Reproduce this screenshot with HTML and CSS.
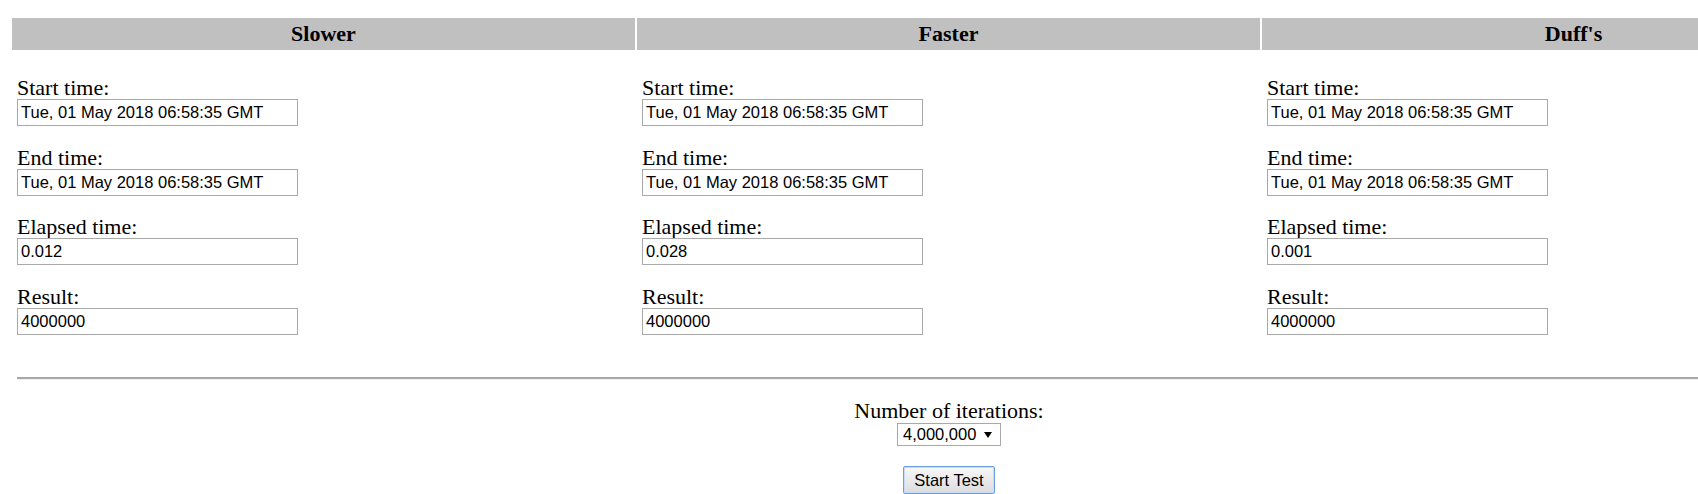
FILE: index.html
```html
<!DOCTYPE html>
<html lang="en">
<head>
<meta charset="utf-8">
<title>Loop timing test</title>
<link rel="stylesheet" href="styles.css">
</head>
<body>
<div class="page">
  <div class="cols">
    <div class="head">Slower</div>
    <div class="head">Faster</div>
    <div class="head">Duff's</div>

    <div class="cell">
      <div class="field"><div class="lbl">Start time:</div><input class="txt" type="text" value="Tue, 01 May 2018 06:58:35 GMT"></div>
      <div class="field"><div class="lbl">End time:</div><input class="txt" type="text" value="Tue, 01 May 2018 06:58:35 GMT"></div>
      <div class="field"><div class="lbl">Elapsed time:</div><input class="txt" type="text" value="0.012"></div>
      <div class="field"><div class="lbl">Result:</div><input class="txt" type="text" value="4000000"></div>
    </div>
    <div class="cell">
      <div class="field"><div class="lbl">Start time:</div><input class="txt" type="text" value="Tue, 01 May 2018 06:58:35 GMT"></div>
      <div class="field"><div class="lbl">End time:</div><input class="txt" type="text" value="Tue, 01 May 2018 06:58:35 GMT"></div>
      <div class="field"><div class="lbl">Elapsed time:</div><input class="txt" type="text" value="0.028"></div>
      <div class="field"><div class="lbl">Result:</div><input class="txt" type="text" value="4000000"></div>
    </div>
    <div class="cell">
      <div class="field"><div class="lbl">Start time:</div><input class="txt" type="text" value="Tue, 01 May 2018 06:58:35 GMT"></div>
      <div class="field"><div class="lbl">End time:</div><input class="txt" type="text" value="Tue, 01 May 2018 06:58:35 GMT"></div>
      <div class="field"><div class="lbl">Elapsed time:</div><input class="txt" type="text" value="0.001"></div>
      <div class="field"><div class="lbl">Result:</div><input class="txt" type="text" value="4000000"></div>
    </div>
  </div>

  <hr class="rule">

  <div class="controls">
    <div class="lbl">Number of iterations:</div>
    <div class="select-wrap">
      <select class="sel">
        <option>4,000,000</option>
      </select>
    </div>
    <button class="btn" type="button">Start Test</button>
  </div>
</div>
</body>
</html>
```
FILE: styles.css
```css
html, body {
  margin: 0;
  padding: 0;
  background: #ffffff;
  overflow: hidden;
}
body {
  font-family: "Liberation Serif", "Times New Roman", serif;
  color: #000;
}
.page {
  width: 1874px;
  margin-left: 12px;
  padding-top: 18px;
}
.cols {
  display: grid;
  grid-template-columns: repeat(3, 623px);
  column-gap: 2px;
  row-gap: 2px;
}
.head {
  background: #c0c0c0;
  height: 32px;
  line-height: 32px;
  text-align: center;
  font-weight: bold;
  font-size: 22px;
}
.cell {
  display: flex;
  flex-direction: column;
  gap: 20.5px;
  padding: 25px 0 0 5px;
}
.field {
  display: flex;
  flex-direction: column;
}
.lbl {
  font-size: 22px;
  line-height: 22px;
  height: 22px;
}
.txt {
  display: block;
  box-sizing: border-box;
  width: 281px;
  height: 27px;
  margin: 0;
  padding: 0 3px;
  border: 1px solid #a9a9a9;
  background: #fff;
  font-family: "Liberation Sans", Arial, sans-serif;
  font-size: 16.5px;
  color: #000;
  outline: none;
}
.rule {
  margin: 42px 0 0 5px;
  height: 0;
  border: 0;
  border-top: 2px solid #a8a8a8;
  border-bottom: 1px solid #efefef;
}
.controls {
  display: flex;
  flex-direction: column;
  align-items: center;
  padding-top: 20px;
}
.select-wrap {
  position: relative;
  margin-top: 1.5px;
}
.select-wrap::after {
  content: "";
  position: absolute;
  right: 9px;
  top: 9px;
  width: 0;
  height: 0;
  border-left: 4px solid transparent;
  border-right: 4px solid transparent;
  border-top: 6px solid #000;
  pointer-events: none;
}
.sel {
  -webkit-appearance: none;
  appearance: none;
  box-sizing: border-box;
  width: 104px;
  height: 23px;
  margin: 0;
  padding: 0 0 0 5px;
  border: 1px solid #a9a9a9;
  border-radius: 0;
  background: #fff;
  font-family: "Liberation Sans", Arial, sans-serif;
  font-size: 16.5px;
  line-height: 21px;
  color: #000;
  outline: none;
}
.btn {
  box-sizing: border-box;
  margin-top: 20px;
  width: 92px;
  height: 28px;
  padding: 0;
  border: 1px solid #6a9fe0;
  border-radius: 2px;
  background: linear-gradient(#f7f7f7, #dddddd);
  font-family: "Liberation Sans", Arial, sans-serif;
  font-size: 16.5px;
  color: #000;
  box-shadow: inset 0 0 0 1px #c8dcf5;
}
```
